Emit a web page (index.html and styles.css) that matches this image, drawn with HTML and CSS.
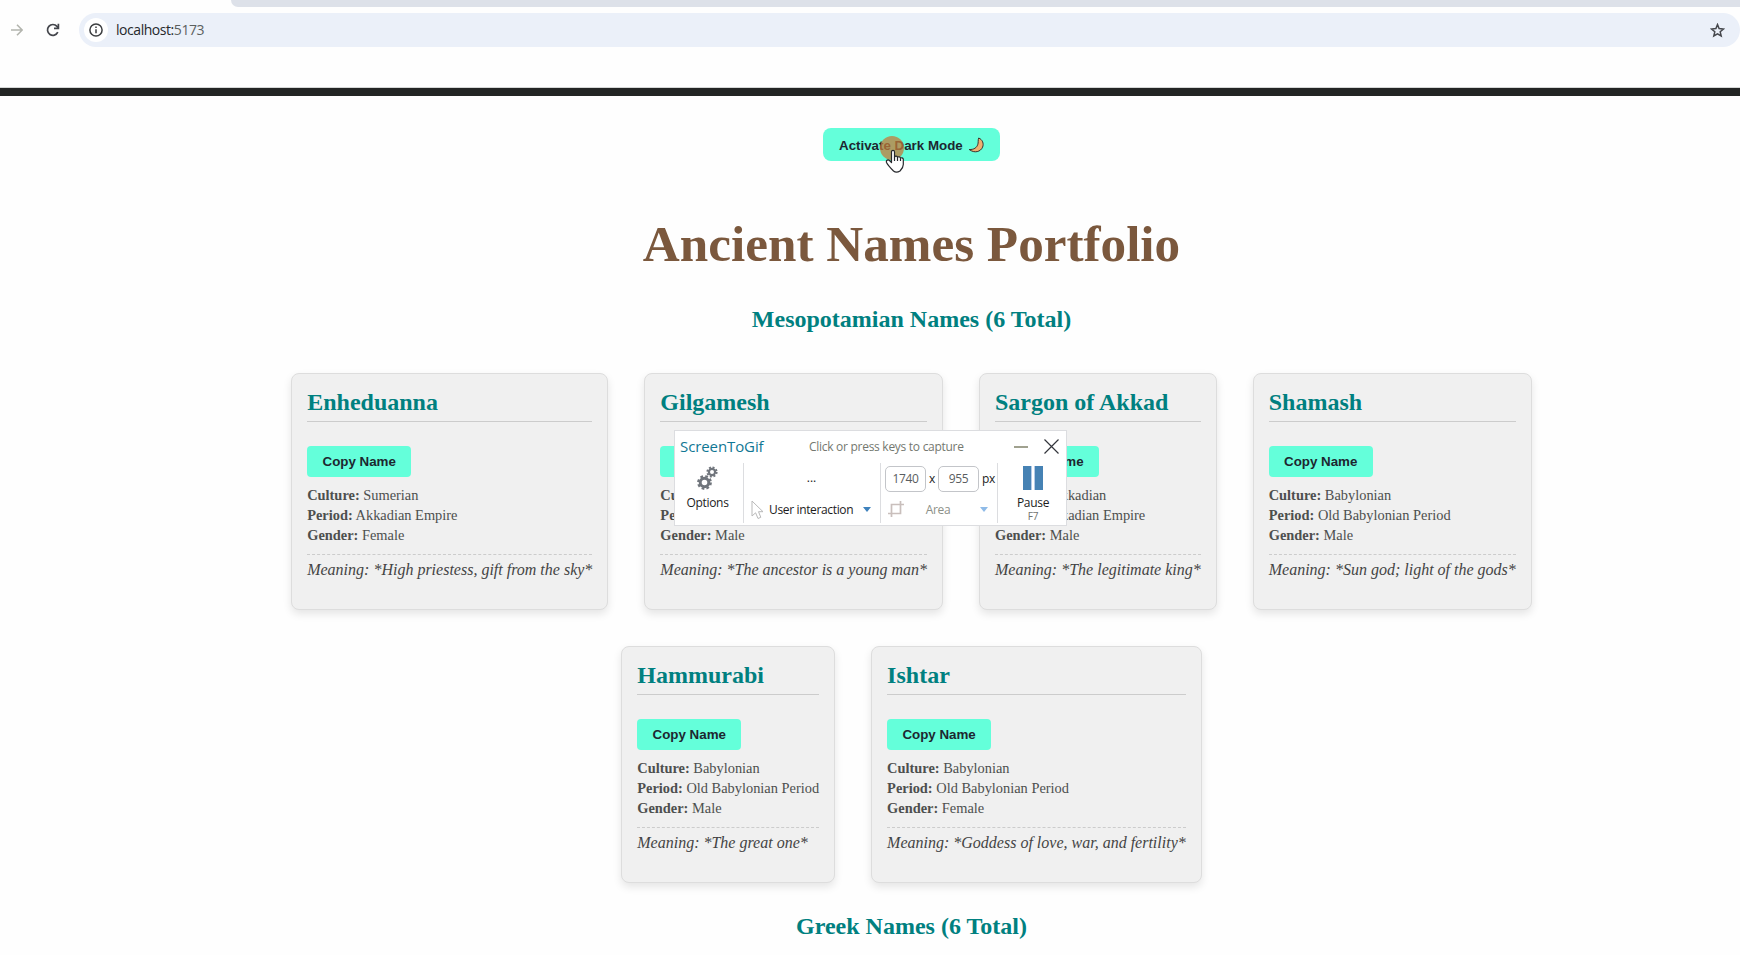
FILE: index.html
```html
<!DOCTYPE html>
<html lang="en">
<head>
<meta charset="utf-8">
<title>Ancient Names Portfolio</title>
<link rel="stylesheet" href="styles.css">
</head>
<body>
<header class="browser">
  <div class="tabstrip"></div>
  <div class="toolbar">
    <svg class="forward" width="12" height="12" viewBox="0 0 12 12" fill="none" stroke="#b3b5ae" stroke-width="1.6"><path d="M0 6h11M6 .8 11.2 6 6 11.2"/></svg>
    <svg class="reload" width="14" height="14" viewBox="0 0 14 14" fill="none" stroke="#44464c" stroke-width="1.7"><path d="M11.8 9.2A5.4 5.4 0 1 1 11 3.4L12.3 5"/><path d="M12.4 .8V5.3H8"/></svg>
    <div class="address">
      <span class="site"><svg width="14" height="14" viewBox="0 0 14 14" fill="none" stroke="#3c3e40" stroke-width="1.5"><circle cx="7" cy="7" r="6.1"/><path d="M7 6.2v4M7 3.6v1.5"/></svg></span>
      <span class="url">localhost:<span class="port">5173</span></span>
      <svg class="star" width="15" height="15" viewBox="0 0 15 15" fill="none" stroke="#45474c" stroke-width="1.5"><path d="M7.5 1.6 9.1 5.6 13.5 6 10.2 8.8 11.2 13 7.5 10.8 3.8 13 4.8 8.8 1.5 6 5.9 5.6Z"/></svg>
    </div>
  </div>
</header>
<main class="page">
  <button class="mode">Activate Dark Mode
    <svg width="16" height="16" viewBox="0 0 16 16"><path d="M10.7 1C14.6 2.6 16 6.700 14.600 10.100 12.700 14.800 6.500 16.600 1.200 12.500 6.200 12.800 8.600 10.500 9.700 7.800 10.600 5.500 9.800 3 10.700 1Z" fill="#efb070" stroke="#3b302b" stroke-linejoin="round"/></svg>
  </button>
  <h1>Ancient Names Portfolio</h1>
  <h2>Mesopotamian Names (6 Total)</h2>
  <section class="cards">
    <article class="card"><h3>Enheduanna</h3><button class="copy">Copy Name</button>
      <p><b>Culture:</b> Sumerian</p><p><b>Period:</b> Akkadian Empire</p><p><b>Gender:</b> Female</p>
      <p class="meaning">Meaning: *High priestess, gift from the sky*</p></article>
    <article class="card"><h3>Gilgamesh</h3><button class="copy">Copy Name</button>
      <p><b>Culture:</b> Sumerian</p><p><b>Period:</b> Early Dynastic</p><p><b>Gender:</b> Male</p>
      <p class="meaning">Meaning: *The ancestor is a young man*</p></article>
    <article class="card"><h3>Sargon of Akkad</h3><button class="copy">Copy Name</button>
      <p><b>Culture:</b> Akkadian</p><p><b>Period:</b> Akkadian Empire</p><p><b>Gender:</b> Male</p>
      <p class="meaning">Meaning: *The legitimate king*</p></article>
    <article class="card"><h3>Shamash</h3><button class="copy">Copy Name</button>
      <p><b>Culture:</b> Babylonian</p><p><b>Period:</b> Old Babylonian Period</p><p><b>Gender:</b> Male</p>
      <p class="meaning">Meaning: *Sun god; light of the gods*</p></article>
    <article class="card"><h3>Hammurabi</h3><button class="copy">Copy Name</button>
      <p><b>Culture:</b> Babylonian</p><p><b>Period:</b> Old Babylonian Period</p><p><b>Gender:</b> Male</p>
      <p class="meaning">Meaning: *The great one*</p></article>
    <article class="card"><h3>Ishtar</h3><button class="copy">Copy Name</button>
      <p><b>Culture:</b> Babylonian</p><p><b>Period:</b> Old Babylonian Period</p><p><b>Gender:</b> Female</p>
      <p class="meaning">Meaning: *Goddess of love, war, and fertility*</p></article>
  </section>
  <h2 class="greek">Greek Names (6 Total)</h2>
</main>

<aside class="recorder">
  <div class="titlebar">
    <span class="app">ScreenToGif</span>
    <span class="hint">Click or press keys to capture</span>
    <svg class="min" width="14" height="2" viewBox="0 0 14 2"><path d="M0 1h14" stroke="#a0a18f" stroke-width="2"/></svg>
    <svg class="close" width="15" height="15" viewBox="0 0 15 15"><path d="M.5.5l14 14M14.500.5l-14 14" stroke="#33353c" stroke-width="1.200"/></svg>
  </div>
  <div class="controls">
    <div class="options">
      <svg width="22" height="24" viewBox="0 0 22 24" fill="none" stroke="#70757c">
        <circle cx="7.500" cy="16.500" r="4.300" stroke-width="3"/><circle cx="7.500" cy="16.500" r="6.300" stroke-width="2.200" stroke-dasharray="2.700 2.248"/>
        <circle cx="15" cy="6" r="3.100" stroke-width="2.200"/><circle cx="15" cy="6" r="4.700" stroke-width="1.800" stroke-dasharray="2 1.691"/>
      </svg>
      <span>Options</span>
    </div>
    <div class="mouse">
      <div class="dots">...</div>
      <div class="row">
        <svg width="14" height="20" viewBox="0 0 14 20" fill="#fff" stroke="#b9b9b9"><path d="M1 1V16L4.600 12.800 7 18.500 9.800 17.300 7.500 11.700H12Z"/></svg>
        <span class="label">User interaction</span>
        <svg width="8" height="5" viewBox="0 0 8 5"><path d="M0 0h8L4 5Z" fill="#3f82bd"/></svg>
      </div>
    </div>
    <div class="size">
      <div class="dims"><span class="box">1740</span><span>x</span><span class="box">955</span><span>px</span></div>
      <div class="row faded">
        <svg width="16" height="16" viewBox="0 0 16 16" fill="none" stroke="#c9bfbc" stroke-width="1.700"><path d="M3.500 16V3.500H16M0 12.500H12.500V0"/></svg>
        <span class="label">Area</span>
        <svg width="8" height="5" viewBox="0 0 8 5"><path d="M0 0h8L4 5Z" fill="#8fbbe8"/></svg>
      </div>
    </div>
    <div class="pause">
      <svg width="20" height="24" viewBox="0 0 20 24"><path d="M0 0h8.500v24H0zM11.500 0H20v24h-8.500z" fill="#4682b4"/><path d="M8.500 0v24M11.500 0v24" stroke="#b5cbe8"/></svg>
      <span>Pause</span><small>F7</small>
    </div>
  </div>
</aside>
<div class="halo"></div>
<svg class="hand" width="20" height="24" viewBox="0 0 20 24" fill="#fff" stroke="#26282c" stroke-width="1.200" stroke-linejoin="round"><path d="M6.500 13.500V3C6.500.700 9.500.700 9.500 3V8C10 6.700 12.500 7 12.500 8.500 13.200 7.300 15.500 7.600 15.500 9.300 16.300 8.300 18.300 8.800 18.300 10.500V15.500C18.300 18 17 20 15 22 13 23.200 10 23.200 8.500 22 6.500 20 3 16.500 1.500 13.500 .8 11 3.200 10.300 4.500 11.500Z"/><path d="M9.500 8v4M12.500 8.500V12M15.500 9.500V12"/></svg>
</body>
</html>
```
FILE: styles.css
```css
* { box-sizing: border-box; }
body {
  margin: 0;
  height: 955px;
  overflow: hidden;
  position: relative;
  background: #fefefe;
  color: #4d4f4e;
  font-family: "Liberation Serif", "Times New Roman", serif;
}
button { border: 0; font: bold 13.333px "Liberation Sans", Arial, sans-serif; background: #64ffda; color: #1d2730; display: block; }

.browser { height: 96px; border-bottom: 8px solid #232524; box-shadow: inset 0 -1px #d5d7d6; }
.tabstrip { height: 7px; margin-left: 231px; background: #dde1e9; border-bottom-left-radius: 11px; }
.toolbar { display: flex; align-items: center; height: 34px; margin-top: 6px; padding-left: 11px; }
.reload { margin-left: 23px; }
.address { flex: 1; height: 34px; margin-left: 19px; padding: 0 15px 0 5px; display: flex; align-items: center; background: #ebf0f9; border-radius: 17px; }
.site { width: 24px; height: 24px; border-radius: 50%; background: #fff; display: flex; align-items: center; justify-content: center; }
.url { flex: 1; margin-left: 8px; padding-bottom: 1px; font: 14px "Open Sans", sans-serif; letter-spacing: -.45px; color: #25282b; }
.port { color: #5b6060; }

.page { padding: 32px 40px 0 123px; text-align: center; }
.mode { margin: 0 auto; width: 177px; height: 33px; padding: 1px 16px 0; border-radius: 8px; display: flex; align-items: center; justify-content: space-between; white-space: nowrap; }
h1 { margin: 53px 0 0; font-size: 51.2px; line-height: 60px; color: #7b583d; }
h2 { margin: 31px 0 0; font-size: 24px; line-height: 28px; color: #008080; }
.cards { display: flex; flex-wrap: wrap; justify-content: center; gap: 36px; width: 1300px; margin: 40px auto 0; text-align: left; }
.card { height: 237px; padding: 15px; background: #f0f0f0; border: 1px solid #ddd; border-radius: 8px; box-shadow: 0 4px 8px rgba(0, 0, 0, .1); white-space: nowrap; }
h3 { margin: 0 0 24px; height: 33px; font-size: 24px; line-height: 27px; color: #008080; border-bottom: 1px solid #ccc; }
.copy { width: 104px; height: 31px; padding: 0; border-radius: 4px; margin-bottom: 8px; }
.card p { margin: 0; font-size: 14.4px; line-height: 20px; }
.card .meaning { margin-top: 9px; padding-top: 5px; font-size: 16px; font-style: italic; border-top: 1px dashed #ccc; color: #444; }
.greek { margin-top: 29px; }

.recorder { position: absolute; left: 674px; top: 430px; width: 393px; height: 96px; background: #fff; border: 1px solid #dcdde0; font: 12px "Open Sans", sans-serif; color: #1c1c1c; letter-spacing: -.3px; }
.titlebar { display: flex; align-items: center; height: 32px; padding: 0 7px 1px 5px; }
.app { width: 86px; padding-bottom: 1px; font-size: 15px; letter-spacing: -.1px; color: #107794; }
.hint { margin-left: 43px; flex: 1; color: #74786f; letter-spacing: -.28px; }
.close { margin-left: 16px; }
.controls { display: flex; height: 60px; }
.controls > div + div { border-left: 1px solid #dcdde0; }
.options, .pause { display: flex; flex-direction: column; align-items: center; line-height: 16px; padding-top: 3px; }
.options { width: 68px; padding-right: 3px; }
.options span, .pause span { margin-top: 5px; }
.mouse { width: 137px; }
.dots { height: 31px; line-height: 30px; text-align: center; letter-spacing: 0; padding-right: 1px; }
.row { display: flex; align-items: center; height: 31px; padding: 0 9px 0 7px; }
.mouse .label { flex: 1; margin-left: 4px; letter-spacing: -.35px; }
.size { width: 117px; }
.dims { display: flex; align-items: center; height: 29px; padding: 2px 0 0 4px; gap: 3px; }
.box { width: 41px; height: 26px; border: 1px solid #c3c5c9; border-radius: 5px; line-height: 24px; text-align: center; color: #5a5d60; }
.size .row { height: 34px; }
.faded .label { flex: 1; text-align: center; padding-right: 8px; color: #8c9088; }
.pause { flex: 1; padding-left: 2px; }
.pause small { font-size: 10px; line-height: 10px; color: #70736f; }

.halo { position: absolute; left: 880px; top: 136px; width: 24px; height: 24px; border-radius: 50%; background: rgba(197, 122, 56, .74); }
.hand { position: absolute; left: 885px; top: 149px; }
```
